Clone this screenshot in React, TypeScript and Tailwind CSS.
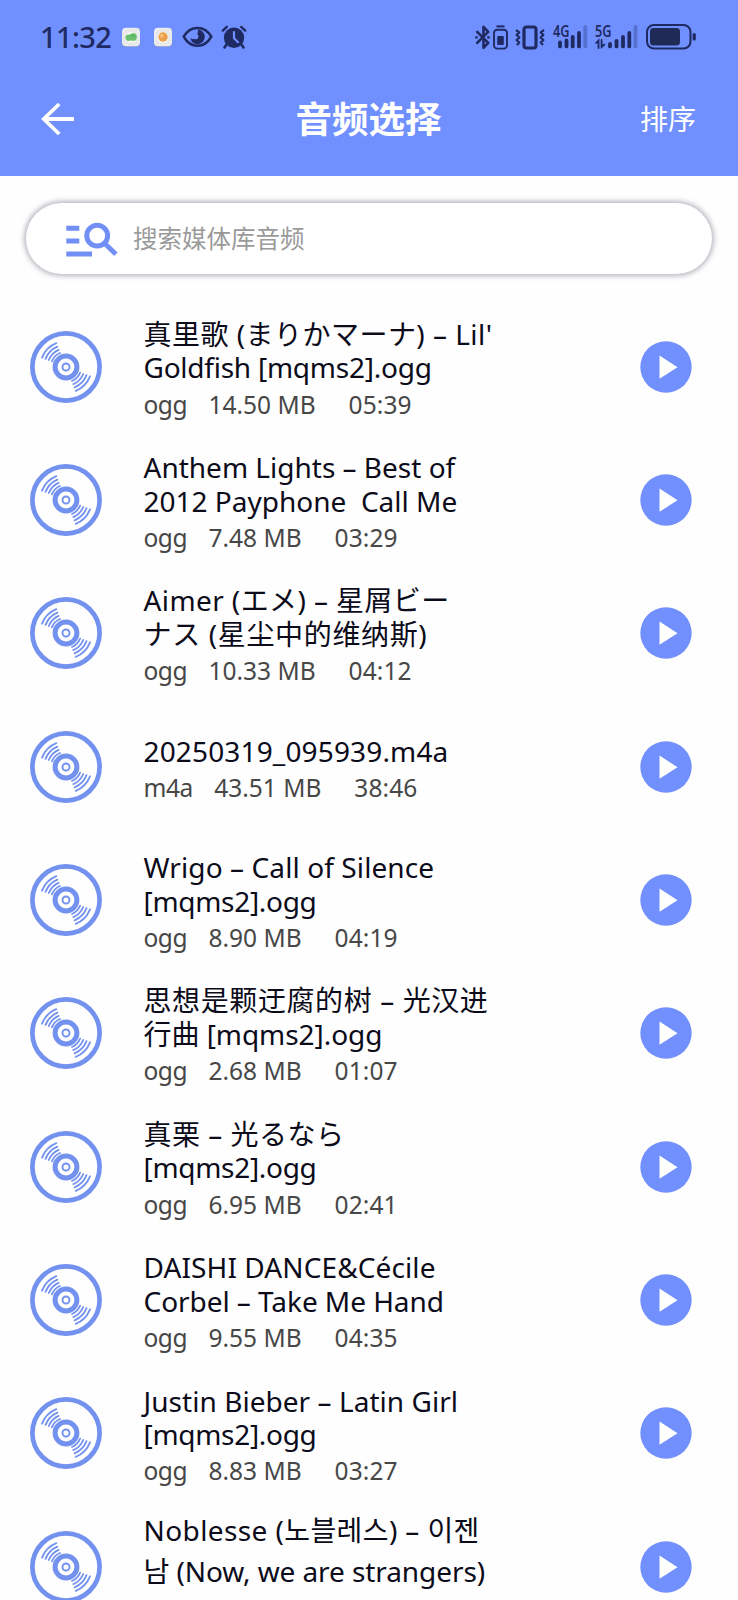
type Track = {
  lines: { text: string; tracking: string }[];
  type: string;
  size: string;
  time: string;
  tall?: boolean;
};

const tracks: Track[] = [
  {
    lines: [
      { text: "真里歌 (まりかマーナ) – Lil'", tracking: 'tracking-[0.47px]' },
      { text: 'Goldfish [mqms2].ogg', tracking: 'tracking-[-0.24px]' },
    ],
    type: 'ogg', size: '14.50 MB', time: '05:39',
  },
  {
    lines: [
      { text: 'Anthem Lights – Best of', tracking: 'tracking-[0px]' },
      { text: '2012 Payphone  Call Me', tracking: 'tracking-[0px]' },
    ],
    type: 'ogg', size: '7.48 MB', time: '03:29',
  },
  {
    lines: [
      { text: 'Aimer (エメ) – 星屑ビー', tracking: 'tracking-[0.4px]' },
      { text: 'ナス (星尘中的维纳斯)', tracking: 'tracking-[0.65px]' },
    ],
    type: 'ogg', size: '10.33 MB', time: '04:12',
  },
  {
    lines: [{ text: '20250319_095939.m4a', tracking: 'tracking-[0.15px]' }],
    type: 'm4a', size: '43.51 MB', time: '38:46',
  },
  {
    lines: [
      { text: 'Wrigo – Call of Silence', tracking: 'tracking-[0.1px]' },
      { text: '[mqms2].ogg', tracking: 'tracking-[-0.3px]' },
    ],
    type: 'ogg', size: '8.90 MB', time: '04:19',
  },
  {
    lines: [
      { text: '思想是颗迂腐的树 – 光汉进', tracking: 'tracking-[0.6px]' },
      { text: '行曲 [mqms2].ogg', tracking: 'tracking-[-0.05px]' },
    ],
    type: 'ogg', size: '2.68 MB', time: '01:07',
  },
  {
    lines: [
      { text: '真栗 – 光るなら', tracking: 'tracking-[0.5px]' },
      { text: '[mqms2].ogg', tracking: 'tracking-[-0.3px]' },
    ],
    type: 'ogg', size: '6.95 MB', time: '02:41',
  },
  {
    lines: [
      { text: 'DAISHI DANCE&Cécile', tracking: 'tracking-[0.1px]' },
      { text: 'Corbel – Take Me Hand', tracking: 'tracking-[-0.05px]' },
    ],
    type: 'ogg', size: '9.55 MB', time: '04:35',
  },
  {
    lines: [
      { text: 'Justin Bieber – Latin Girl', tracking: 'tracking-[0.05px]' },
      { text: '[mqms2].ogg', tracking: 'tracking-[-0.3px]' },
    ],
    type: 'ogg', size: '8.83 MB', time: '03:27',
  },
  {
    lines: [
      { text: 'Noblesse (노블레스) – 이젠', tracking: 'tracking-[0.4px]' },
      { text: '남 (Now, we are strangers)', tracking: 'tracking-[-0.08px]' },
    ],
    type: 'ogg', size: '8.24 MB', time: '03:45', tall: true,
  },
];

function AppBadge({ kind }: { kind: 'green' | 'orange' }) {
  return (
    <svg width="20" height="21" viewBox="0 0 20 21">
      <rect x="1" y="1.5" width="18" height="18.5" rx="4" fill="#8b93ad" opacity="0.7" />
      <rect x="1" y="0.8" width="18" height="18.4" rx="4" fill="#e9eaec" />
      <circle cx="10" cy="10.5" r="6.5" fill="#f5f3f0" stroke="#dcdcda" strokeWidth="0.6" />
      {kind === 'green' ? (
        <g fill="#6cc070">
          <circle cx="7.6" cy="10.6" r="3.1" />
          <circle cx="12.2" cy="9.8" r="3.6" fill="#5fba66" />
          <rect x="5" y="10.2" width="10.4" height="3.2" rx="1.6" />
        </g>
      ) : (
        <g>
          <circle cx="10" cy="10" r="4.7" fill="#eda04a" />
          <circle cx="8.8" cy="8.8" r="2" fill="#f6bd74" />
        </g>
      )}
    </svg>
  );
}

function EyeIcon() {
  return (
    <svg width="31" height="22" viewBox="0 0 31 22">
      <path d="M1.7 10.700C5 5 10 2 15.500 2s10.500 3 13.800 8.700C26 16.500 21 19.800 15.500 19.800S5 16.500 1.700 10.700Z" fill="none" stroke="#1f2a63" strokeWidth="2.600" strokeLinejoin="round" />
      <path d="M15.500 3.600a7.300 7.300 0 1 1-7.200 8.500c1 1.100 2.600 1.500 3.800.7 1.100.9 3 .7 3.900-.7 1-1.500.4-3.200-.8-4 .9-1.500 1-3.100.3-4.500Z" fill="#1f2a63" />
    </svg>
  );
}

function AlarmIcon() {
  return (
    <svg width="26" height="25" viewBox="0 0 26 25">
      <circle cx="13" cy="12.800" r="10.200" fill="#1f2a63" />
      <path d="M1.800 5.600 5.800 1.900M24.200 5.600l-4-3.700" stroke="#1f2a63" strokeWidth="2.400" strokeLinecap="round" />
      <path d="m5.500 19.500-2 3m17-3 2 3" stroke="#1f2a63" strokeWidth="2.600" strokeLinecap="round" />
      <path d="M13 7v6.300l4 3.900" fill="none" stroke="#7090ff" strokeWidth="2.200" strokeLinecap="round" strokeLinejoin="round" />
    </svg>
  );
}

function BluetoothIcon() {
  return (
    <svg width="15" height="25" viewBox="0 0 15 25">
      <path d="m2.200 6.800 11 11-4.700 5V1.800l4.700 5-11 11" fill="none" stroke="#1f2a63" strokeWidth="2.600" strokeLinejoin="round" strokeLinecap="round" />
      <path d="M.2 12.300h2.600M12.200 12.300h2.600" stroke="#1f2a63" strokeWidth="2.200" />
    </svg>
  );
}

function DeviceBatteryIcon() {
  return (
    <svg width="15" height="25" viewBox="0 0 15 25">
      <path d="M3.500 1.400h8" stroke="#1f2a63" strokeWidth="2" />
      <rect x="1" y="4.800" width="13" height="18.800" rx="3.200" fill="none" stroke="#1f2a63" strokeWidth="1.900" />
      <rect x="4.200" y="11" width="6.600" height="9" rx="1" fill="#1f2a63" />
    </svg>
  );
}

function VibrateIcon() {
  return (
    <svg width="30" height="25" viewBox="0 0 30 25">
      <rect x="9" y="2" width="12" height="21" rx="2.500" fill="none" stroke="#1f2a63" strokeWidth="3.200" />
      <path d="m1 5 3.200 2.400L1.600 10l2.800 2.500-2.800 2.500 2.600 2.500L2 20M29 5l-3.200 2.400 2.600 2.600-2.800 2.500 2.800 2.500-2.600 2.500L28 20" fill="none" stroke="#1f2a63" strokeWidth="2.200" strokeLinejoin="round" />
    </svg>
  );
}

function Signal({ label, data }: { label: string; data?: boolean }) {
  return (
    <svg width={data ? 43 : 35} height="26" viewBox={data ? '0 0 43 26' : '0 0 35 26'}>
      <text x="0" y="12.600" textLength="16.500" lengthAdjust="spacingAndGlyphs" className="fill-[#1f2a63] font-['Noto_Sans',sans-serif] text-[15.500px] font-semibold">
        {label}
      </text>
      {data ? (
        <g stroke="#1f2a63" strokeLinecap="round" strokeWidth="3.800">
          <path d="M15 20v2.400M21.500 17v5.400M28 13v9.400M34.300 9v13.400" />
          <path d="M40.500 3v19.400" stroke="#5570cf" />
          <path d="M1.200 19 3.500 16.600V24M6.600 16v7l2.800-2.500" strokeWidth="1.800" fill="none" />
        </g>
      ) : (
        <g stroke="#1f2a63" strokeLinecap="round" strokeWidth="3.800">
          <path d="M7 18.500v3.900M13.500 16.500v5.900M19.700 13v9.400M26 9v13.400" />
          <path d="M32.300 3v19.400" stroke="#5570cf" />
        </g>
      )}
    </svg>
  );
}

function BatteryIcon() {
  return (
    <svg width="51" height="26" viewBox="0 0 51 26">
      <rect x="1" y="1" width="43.500" height="23.500" rx="7" fill="none" stroke="#1f2a63" strokeWidth="2" />
      <rect x="4" y="4" width="30" height="17.500" rx="3.500" fill="#202a56" />
      <rect x="46.600" y="9" width="3.200" height="7.500" rx="1.500" fill="#1f2a63" />
    </svg>
  );
}

function BackIcon() {
  return (
    <svg width="34" height="34" viewBox="0 0 34 34" fill="none" stroke="#fff" strokeWidth="3.800">
      <path d="M34 17H4M19.200 2 3.800 17l15.400 15" />
    </svg>
  );
}

function ListSearchIcon() {
  return (
    <svg width="52" height="38" viewBox="0 0 52 38" fill="none" stroke="#728ff5">
      <path d="M.3 9.300h13M.3 22h13M.3 35h25.700" strokeWidth="4.900" />
      <circle cx="31.200" cy="16.700" r="10.400" strokeWidth="5" />
      <path d="m38.300 24 11.600 11.200" strokeWidth="5" />
    </svg>
  );
}

function DiscIcon() {
  return (
    <svg width="72" height="72" viewBox="0 0 72 72" fill="none" stroke="#7391ef">
      <circle cx="36" cy="36" r="33.600" strokeWidth="4.700" />
      <circle cx="36" cy="36" r="10.900" strokeWidth="5" />
      <circle cx="36" cy="36" r="3.500" strokeWidth="1.900" />
      <g strokeWidth="1.800" strokeLinecap="round">
        <path d="M12 26.700A25.700 25.700 0 0 1 26.300 12.200" />
        <path d="M15.500 27.900A22.100 22.100 0 0 1 27.400 15.700" />
        <path d="M18.800 29A18.600 18.600 0 0 1 28.600 18.900" />
        <path d="M21.900 30.300A15.200 15.200 0 0 1 30 22" />
        <path d="M60 45.300A25.700 25.700 0 0 1 45.700 59.800" />
        <path d="M56.500 44.100A22.100 22.100 0 0 1 44.600 56.300" />
        <path d="M53.200 43A18.600 18.600 0 0 1 43.400 53.100" />
        <path d="M50.100 41.700A15.200 15.200 0 0 1 42 50" />
      </g>
    </svg>
  );
}

function PlayIcon() {
  return (
    <svg width="52" height="52" viewBox="0 0 52 52">
      <circle cx="26" cy="26" r="25.700" fill="#7190fd" />
      <path d="M19.500 14.600v23.200L37.500 26.200Z" fill="#fff" />
    </svg>
  );
}

function TrackRow({ track }: { track: Track }) {
  return (
    <li className="flex h-[133.350px] shrink-0 items-center pl-[30px] pr-[46px]">
      <DiscIcon />
      <div className="ml-[41.500px] flex-1 pt-[8px]">
        <div className={track.tall ? 'text-[28px] leading-[41.300px] text-[#0b0b1a]' : 'text-[28px] leading-[33.400px] text-[#0b0b1a]'}>
          {track.lines.map((line) => (
            <div key={line.text} className={`whitespace-pre ${line.tracking}`}>{line.text}</div>
          ))}
        </div>
        <div className="flex whitespace-pre text-[24.500px] leading-[39px] text-[#474747]">
          <span className="tracking-[-0.500px]">{track.type}</span>
          <span className="ml-[21.500px]">{track.size}</span>
          <span className="ml-[33px] tracking-[0.100px]">{track.time}</span>
        </div>
      </div>
      <button aria-label="play" className="shrink-0">
        <PlayIcon />
      </button>
    </li>
  );
}

export default function App() {
  return (
    <div className="flex h-[1600px] w-[738px] flex-col overflow-hidden bg-[#fefefe] font-['Noto_Sans','Noto_Sans_CJK_SC','Noto_Sans_CJK_KR',sans-serif]">
      <header className="h-[176px] shrink-0 bg-[#7090ff]">
        <div className="flex h-[74px] items-center justify-between pl-[40px] pr-[41px]">
          <div className="flex items-center">
            <span className="w-[81px] text-[29px] font-medium leading-[34px] tracking-[-0.600px] text-[#1f2a63]">11:32</span>
            <AppBadge kind="green" />
            <span className="ml-[12px]"><AppBadge kind="orange" /></span>
            <span className="ml-[9px]"><EyeIcon /></span>
            <span className="ml-[8px]"><AlarmIcon /></span>
          </div>
          <div className="flex items-center">
            <BluetoothIcon />
            <span className="ml-[3px]"><DeviceBatteryIcon /></span>
            <span className="ml-[7px]"><VibrateIcon /></span>
            <span className="ml-[8px]"><Signal label="4G" /></span>
            <span className="ml-[7px]"><Signal label="5G" data /></span>
            <span className="ml-[8px]"><BatteryIcon /></span>
          </div>
        </div>
        <div className="grid h-[90px] grid-cols-[1fr_auto_1fr] items-center pl-[40px] pr-[41px]">
          <BackIcon />
          <h1 className="text-[36.500px] font-bold leading-[48px] text-white">音频选择</h1>
          <span className="justify-self-end pr-px text-[28px] leading-[40px] text-white">排序</span>
        </div>
      </header>

      <div className="mx-[26px] mt-[27px] flex h-[70.500px] shrink-0 items-center rounded-full bg-white pl-[40px] shadow-[0_0_5px_2px_rgba(70,70,95,0.38)]">
        <ListSearchIcon />
        <span className="ml-[15px] pt-[2px] text-[24.500px] leading-[36px] text-[#9a9a9a]">搜索媒体库音频</span>
      </div>

      <ul className="mt-[26.500px] flex flex-col">
        {tracks.map((track) => (
          <TrackRow key={track.lines[0].text} track={track} />
        ))}
      </ul>
    </div>
  );
}
